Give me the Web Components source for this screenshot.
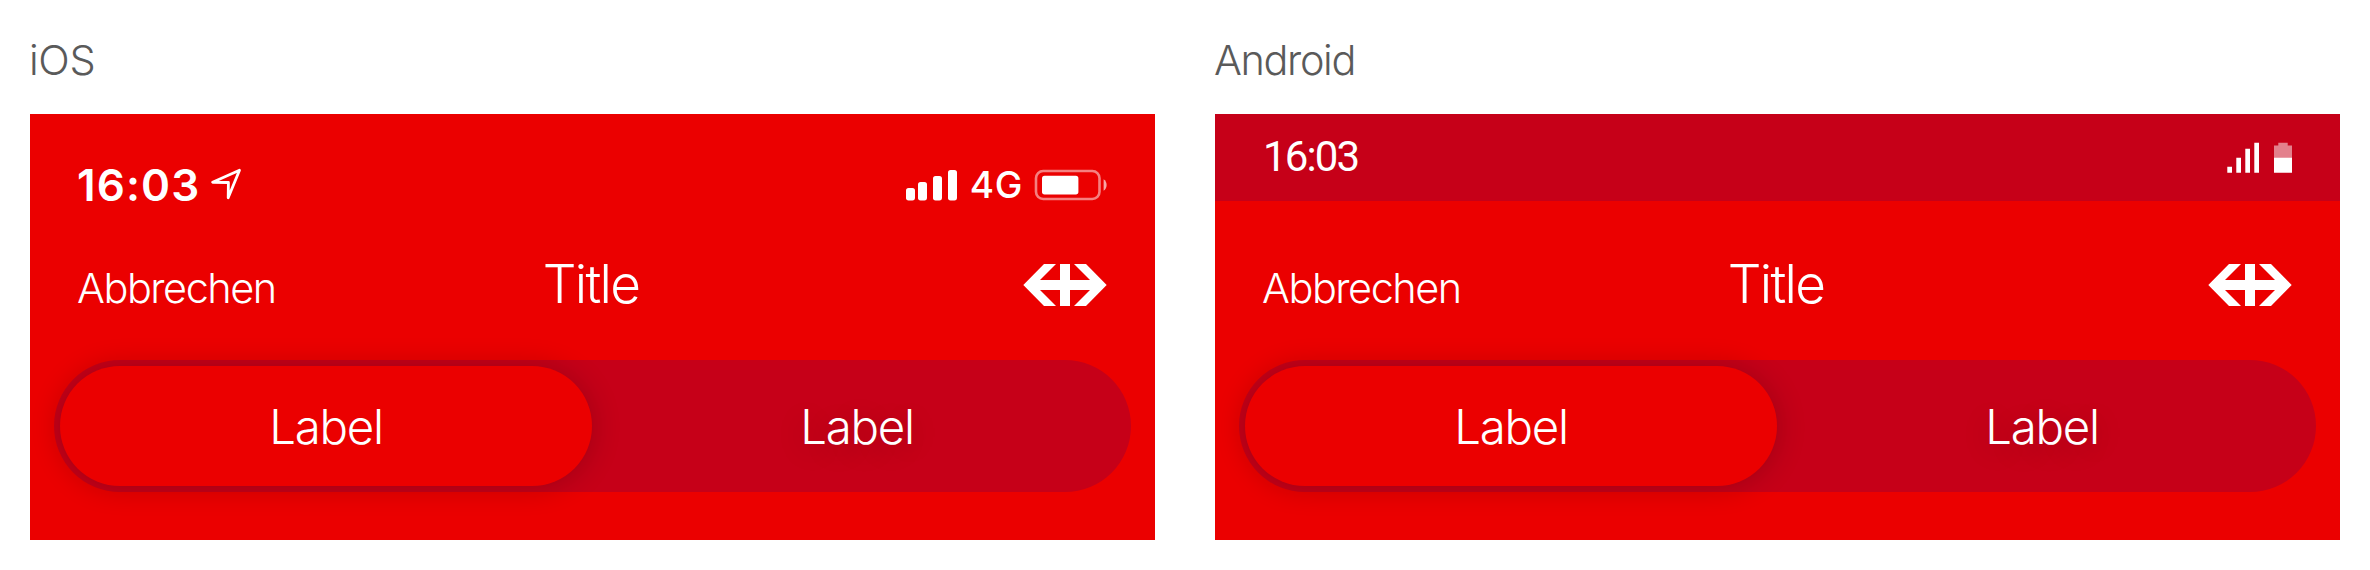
<!DOCTYPE html>
<html lang="de">
<head>
<meta charset="utf-8">
<title>Toggle header</title>
<style>
  body { margin: 0; background: #fff; font-family: Inter, "Liberation Sans", sans-serif; font-weight: 300; }
</style>
</head>
<body>
<platform-board>
  <platform-demo label="iOS" spacing="-0.3px">
    <ios-status-bar slot="status" time="16:03" network="4G"></ios-status-bar>
    <app-header slot="header" action="Abbrechen">Title</app-header>
    <segmented-toggle slot="toggle"><span slot="first">Label</span><span slot="second">Label</span></segmented-toggle>
  </platform-demo>
  <platform-demo label="Android" spacing="-1.35px">
    <android-status-bar slot="status" time="16:03"></android-status-bar>
    <app-header slot="header" action="Abbrechen">Title</app-header>
    <segmented-toggle slot="toggle"><span slot="first">Label</span><span slot="second">Label</span></segmented-toggle>
  </platform-demo>
</platform-board>
<script>
const define = (name, render) => customElements.define(name, class extends HTMLElement {
  constructor() {
    super();
    this.attachShadow({ mode: "open" });
  }
  connectedCallback() {
    this.shadowRoot.innerHTML = render(this);
  }
});

define("platform-board", () => `
  <style>
    :host { display: grid; grid-template-columns: 1125px 1125px; gap: 60px; padding: 0 30px; height: 570px; box-sizing: border-box; }
  </style>
  <slot></slot>`);

define("platform-demo", el => `
  <style>
    :host { display: block; }
    h2 { margin: 0; padding-top: 30px; height: 84px; line-height: 60px; font-size: 41.4px; font-weight: 300; letter-spacing: ${el.getAttribute("spacing")}; color: #5a5a5a; }
    h2 span { margin-left: -1px; }
    section { display: flex; flex-direction: column; height: 426px; background: #eb0000; color: #fff; overflow: hidden; }
    .body { margin-top: auto; padding-bottom: 48px; }
  </style>
  <h2><span>${el.getAttribute("label")}</span></h2>
  <section>
    <slot name="status"></slot>
    <div class="body"><slot name="header"></slot><slot name="toggle"></slot></div>
  </section>`);

define("ios-status-bar", el => `
  <style>
    :host { display: flex; align-items: center; height: 132px; padding: 9px 48px 0 47px; box-sizing: border-box; }
    .time { font-size: 44px; font-weight: 600; letter-spacing: 1.1px; line-height: 60px; }
    .arrow { margin-left: 10px; margin-top: -1px; }
    .cell { margin-left: auto; }
    .net { font-size: 37px; font-weight: 500; letter-spacing: .6px; line-height: 60px; margin: 0 11px 0 13px; }
    svg { display: block; flex: none; }
  </style>
  <span class="time">${el.getAttribute("time")}</span>
  <svg class="arrow" width="32" height="32" viewBox="0 0 32 32" fill="none" stroke="#fff" stroke-width="2.8" stroke-linejoin="round"><path d="M29.5 2.2 2.6 14.3 18.4 14.5 18.2 29.8Z"/></svg>
  <svg class="cell" width="52" height="32" viewBox="0 0 52 32" fill="#fff"><rect x="1" y="19" width="9" height="12.4" rx="2.6"/><rect x="13" y="13" width="9" height="18.4" rx="2.6"/><rect x="28" y="7" width="9" height="24.4" rx="2.6"/><rect x="43" y="1" width="9" height="30.4" rx="2.6"/></svg>
  <span class="net">${el.getAttribute("network")}</span>
  <svg width="73" height="32" viewBox="0 0 73 32"><rect x="2" y="2" width="63.5" height="28" rx="7.2" fill="none" stroke="#fff" stroke-opacity=".5" stroke-width="2.6"/><rect x="8" y="6.8" width="36.4" height="18.6" rx="2.6" fill="#fff"/><path d="M69.6 10.2Q72.6 12.2 72.6 16T69.6 21.8Z" fill="#fff" fill-opacity=".65"/></svg>`);

define("android-status-bar", el => `
  <style>
    :host { display: flex; align-items: center; height: 87px; padding: 0 48px; box-sizing: border-box; background: #c60018; }
    .time { font: 400 42px/60px Roboto, sans-serif; letter-spacing: -1.9px; margin-top: -2px; }
    svg { display: block; margin-left: auto; }
  </style>
  <span class="time">${el.getAttribute("time")}</span>
  <svg width="66" height="31" viewBox="0 0 66 31" fill="#fff"><path d="M1.3 24.7h4.7v6.1H1.3ZM10.3 15.7H15v15.1h-4.7ZM19.3 6.7H24v24.1h-4.7ZM28.3.7H33v30.1h-4.7ZM48 15.5h18v15.3H48Z"/><path fill-opacity=".5" d="M52.3.7h9.4V3.5H66v12H48v-12h4.3Z"/></svg>`);

define("app-header", el => `
  <style>
    :host { display: grid; grid-template-columns: 1fr auto 1fr; align-items: start; height: 114px; padding: 0 48px; box-sizing: border-box; }
    .action { font-size: 41.4px; letter-spacing: -1.45px; line-height: 84px; margin-left: -1px; }
    h1 { margin: 0; padding-right: 3px; font-size: 53px; font-weight: 300; letter-spacing: -1.65px; line-height: 77px; }
    svg { display: block; justify-self: end; margin: 18px 0 0; }
  </style>
  <span class="action">${el.getAttribute("action")}</span>
  <h1><slot></slot></h1>
  <svg width="84" height="42" viewBox="0 0 84 42" fill="#fff"><path d="M.3 21 21 0H33L17 16H37V0H47V16H67L51 0H63L83.7 21 63 42H51L67 26H47V42H37V26H17L33 42H21Z"/></svg>`);

define("segmented-toggle", () => `
  <style>
    :host { display: grid; grid-template-columns: 532px 1fr; width: 1077px; height: 132px; margin: 0 24px; padding: 6px; box-sizing: border-box; border-radius: 66px; background: #c60018; font-size: 47.4px; letter-spacing: -1.3px; }
    .seg { display: flex; align-items: center; justify-content: center; border-radius: 60px; }
    .on { background: #eb0000; box-shadow: 0 1px 30px rgba(0,0,0,.2); }
    .off { padding-right: 3px; text-shadow: 0 6px 30px rgba(0,0,0,.2); }
  </style>
  <div class="seg on"><slot name="first"></slot></div>
  <div class="seg off"><slot name="second"></slot></div>`);
</script>
</body>
</html>
